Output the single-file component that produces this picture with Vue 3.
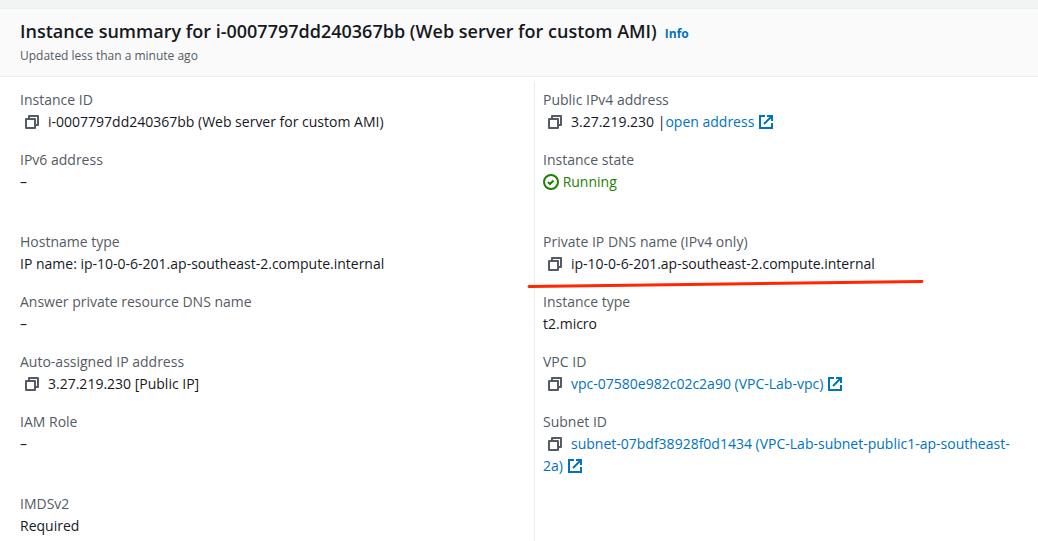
<script setup>
const fields = [
  { label: 'Instance ID', text: 'i-0007797dd240367bb (Web server for custom AMI)', copy: true },
  { label: 'Public IPv4 address', text: '3.27.219.230 |', link: 'open address', copy: true },
  { label: 'IPv6 address', text: '–' },
  { label: 'Instance state', status: 'Running', tall: true },
  { label: 'Hostname type', text: 'IP name: ip-10-0-6-201.ap-southeast-2.compute.internal' },
  { label: 'Private IP DNS name (IPv4 only)', text: 'ip-10-0-6-201.ap-southeast-2.compute.internal', copy: true, marked: true },
  { label: 'Answer private resource DNS name', text: '–' },
  { label: 'Instance type', text: 't2.micro' },
  { label: 'Auto-assigned IP address', text: '3.27.219.230 [Public IP]', copy: true },
  { label: 'VPC ID', link: 'vpc-07580e982c02c2a90 (VPC-Lab-vpc)', copy: true },
  { label: 'IAM Role', text: '–' },
  { label: 'Subnet ID', link: 'subnet-07bdf38928f0d1434 (VPC-Lab-subnet-public1-ap-southeast-2a)', copy: true },
  { label: 'IMDSv2', text: 'Required' },
  { empty: true },
]
</script>

<template>
  <main class="page">
    <header class="header">
      <div class="heading">
        <h1 class="title">Instance summary for i-0007797dd240367bb (Web server for custom AMI)</h1>
        <a class="info" href="#info">Info</a>
      </div>
      <p class="updated">Updated less than a minute ago</p>
    </header>

    <dl class="fields">
      <div v-for="(field, i) in fields" :key="i" class="field">
        <template v-if="!field.empty">
          <dt class="label">{{ field.label }}</dt>
          <dd class="value" :class="{ tall: field.tall }">
            <button v-if="field.copy" class="copy" type="button" :aria-label="'Copy ' + field.label">
              <svg class="icon" viewBox="0 0 16 16" aria-hidden="true">
                <path d="M2 5h9v9H2z" />
                <path d="M5 5V2h9v9h-3" />
              </svg>
            </button>
            <span v-if="field.status" class="status">
              <svg class="icon" viewBox="0 0 16 16" aria-hidden="true">
                <circle cx="8" cy="8" r="7" />
                <path d="M5 8l2 2 3.5-3.5" />
              </svg>
              {{ field.status }}
            </span>
            <template v-if="field.text">{{ field.text }}</template>
            <a v-if="field.link" class="link" href="#resource">{{ field.link }}&nbsp;<svg class="icon" viewBox="0 0 16 16" aria-hidden="true">
              <path d="M7 2H2v12h12V9" />
              <path d="M9 2h5v5M6 10l8-8" />
            </svg></a>
          </dd>
          <svg v-if="field.marked" class="underline" viewBox="0 0 398 10" aria-hidden="true">
            <path d="M2 7.500L200 5L395 2.500" />
          </svg>
        </template>
      </div>
    </dl>
  </main>
</template>

<style>
body {
  margin: 0;
  background: #fff;
}
</style>

<style scoped>
.page {
  border-top: 8px solid #f2f3f3;
  font-family: "Open Sans", "Noto Sans", sans-serif;
  font-size: 14px;
  line-height: 22px;
  color: #16191f;
}

.header {
  padding: 10px 20px;
  background: #fafafa;
  border-top: 1px solid #eaeded;
  border-bottom: 1px solid #eaeded;
}

.heading {
  display: flex;
  align-items: baseline;
  gap: 8px;
}

.title {
  margin: 0;
  font-size: 18px;
  font-weight: 600;
  line-height: 24px;
}

.info {
  font-size: 12px;
  font-weight: 700;
  line-height: 20px;
  color: #0073bb;
  text-decoration: none;
}

.updated {
  margin: 2px 0 0;
  font-size: 12px;
  line-height: 20px;
  color: #545b64;
}

.fields {
  display: grid;
  grid-template-columns: 29fr 28fr;
  margin: 0;
  padding: 4px 0 0 12px;
}

.field {
  position: relative;
  padding: 8px 16px 8px 8px;
}

.field:nth-child(even) {
  border-left: 1px solid #eaeded;
}

.field:nth-last-child(-n + 2) {
  padding-bottom: 4px;
}

.label {
  color: #545b64;
}

.value {
  margin: 0;
}

.tall {
  min-height: 44px;
}

.icon {
  width: 16px;
  height: 16px;
  vertical-align: -3px;
  fill: none;
  stroke: currentColor;
  stroke-width: 2;
}

.copy {
  margin: 0 4px 0 0;
  padding: 0 4px;
  border: 0;
  background: none;
  font: inherit;
  color: #545b64;
  cursor: pointer;
}

.copy .icon {
  stroke-linejoin: round;
}

.status {
  color: #1d8102;
}

.link {
  color: #0073bb;
  text-decoration: none;
}

.underline {
  position: absolute;
  z-index: 1;
  top: 56px;
  left: -8px;
  width: 398px;
  height: 10px;
  fill: none;
  stroke: #ff2600;
  stroke-width: 3;
  stroke-linecap: round;
}
</style>
